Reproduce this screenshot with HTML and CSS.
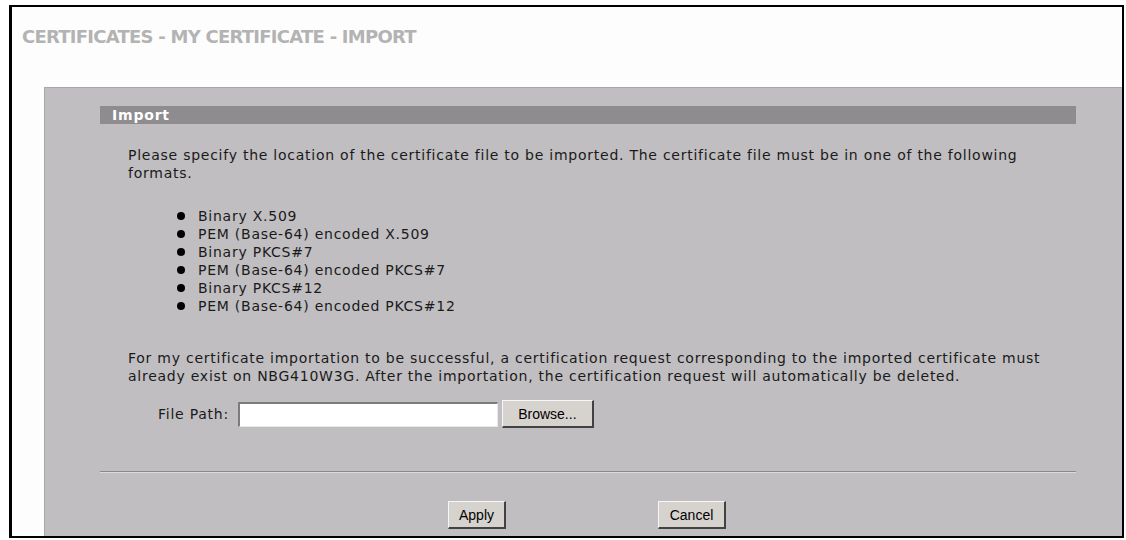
FILE: index.html
```html
<!DOCTYPE html>
<html>
<head>
<meta charset="utf-8">
<link rel="stylesheet" href="styles.css">
</head>
<body>
<div class="frame">
  <h1 class="title">CERTIFICATES - MY CERTIFICATE - IMPORT</h1>
  <div class="panel">
    <div class="bar">Import</div>
    <div class="content">
      <p class="para">Please specify the location of the certificate file to be imported. The certificate file must be in one of the following formats.</p>
      <ul class="formats">
        <li>Binary X.509</li>
        <li>PEM (Base-64) encoded X.509</li>
        <li>Binary PKCS#7</li>
        <li>PEM (Base-64) encoded PKCS#7</li>
        <li>Binary PKCS#12</li>
        <li>PEM (Base-64) encoded PKCS#12</li>
      </ul>
      <p class="para">For my certificate importation to be successful, a certification request corresponding to the imported certificate must already exist on NBG410W3G. After the importation, the certification request will automatically be deleted.</p>
      <div class="filerow">
        <span class="label">File Path:</span>
        <span class="input"></span>
        <span class="btn browse">Browse...</span>
      </div>
    </div>
    <div class="rule"></div>
    <div class="actions">
      <span class="btn apply">Apply</span>
      <span class="btn cancel">Cancel</span>
    </div>
  </div>
</div>
</body>
</html>
```

FILE: styles.css
```css
html, body {
  margin: 0;
  padding: 0;
  background: #ffffff;
}
body {
  width: 1126px;
  height: 540px;
  overflow: hidden;
  font-family: "DejaVu Sans", Verdana, sans-serif;
}
.frame {
  box-sizing: border-box;
  margin: 5px 0 0 9px;
  width: 1115px;
  height: 533px;
  border: 2px solid #000;
  border-left-width: 3px;
  background: #fdfdfd;
  display: flex;
  flex-direction: column;
  overflow: hidden;
}
.title {
  margin: 0;
  padding: 19px 0 0 10px;
  height: 60px;
  box-sizing: border-box;
  font-size: 18px;
  font-weight: bold;
  color: #b3b3b3;
  letter-spacing: -0.75px;
  line-height: 22px;
}
.panel {
  flex: 1;
  margin: 20px 0 0 32px;
  background: #c0bec1;
  border-top: 1px solid #a9a7aa;
  border-left: 1px solid #a9a7aa;
  padding: 18px 46px 0 55px;
  display: flex;
  flex-direction: column;
}
.bar {
  height: 18px;
  background: #8e8c8f;
  color: #ffffff;
  font-weight: bold;
  font-size: 14px;
  letter-spacing: 0.8px;
  line-height: 18px;
  padding-left: 12px;
}
.content {
  padding: 22px 20px 0 28px;
  font-size: 14px;
  letter-spacing: 0.75px;
  color: #1a1a1a;
}
.para {
  margin: 0;
  line-height: 18px;
}
.formats {
  list-style: none;
  margin: 25px 0 34px 0;
  padding: 0 0 0 70px;
  line-height: 18px;
}
.formats li {
  position: relative;
}
.formats li::before {
  content: "";
  position: absolute;
  left: -21px;
  top: 5px;
  width: 8px;
  height: 8px;
  border-radius: 50%;
  background: #000;
}
.filerow {
  display: flex;
  align-items: center;
  margin-top: 15px;
  padding-left: 30px;
}
.label {
  margin-right: 9px;
}
.input {
  box-sizing: border-box;
  width: 260px;
  height: 25px;
  background: #fff;
  border-top: 2px solid #7d7b7e;
  border-left: 2px solid #7d7b7e;
  border-right: 1px solid #e8e8e8;
  border-bottom: 1px solid #e8e8e8;
}
.btn {
  box-sizing: border-box;
  display: inline-flex;
  align-items: center;
  justify-content: center;
  height: 28px;
  background: #d6d3ce;
  border-top: 1px solid #f6f6f6;
  border-left: 1px solid #f6f6f6;
  border-right: 2px solid #424242;
  border-bottom: 2px solid #424242;
  font-family: "Liberation Sans", Arial, sans-serif;
  font-size: 14px;
  letter-spacing: 0;
  color: #000;
}
.browse {
  width: 92px;
  margin-left: 4px;
}
.rule {
  margin-top: 43px;
  height: 0;
  border-top: 1px solid #8a888b;
  border-bottom: 1px solid #dcdadd;
}
.actions {
  display: flex;
  margin-top: 28px;
  padding-left: 348px;
}
.apply {
  width: 58px;
}
.cancel {
  width: 68px;
  margin-left: 152px;
}
```
